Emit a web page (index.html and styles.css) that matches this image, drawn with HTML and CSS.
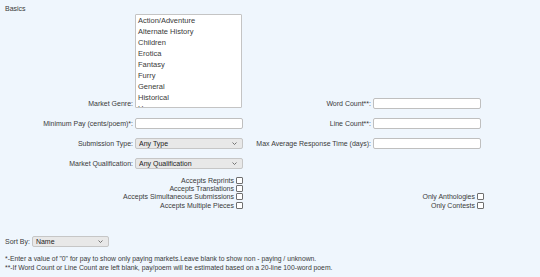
FILE: index.html
```html
<!DOCTYPE html>
<html lang="en">
<head>
  <meta charset="UTF-8">
  <meta name="viewport" content="width=device-width, initial-scale=1.0">
  <title>Market Search</title>
  <link rel="stylesheet" href="styles.css">
</head>
<body>

  <form class="search" onsubmit="return false;">
    <div class="section-title">Basics</div>

    <!-- Basic fields -->
    <div class="fields">
      <label class="lbl" for="genre">Market Genre:</label>
      <select class="genres" id="genre" multiple>
        <option>Action/Adventure</option>
        <option>Alternate History</option>
        <option>Children</option>
        <option>Erotica</option>
        <option>Fantasy</option>
        <option>Furry</option>
        <option>General</option>
        <option>Historical</option>
        <option>Horror</option>
        <option>Humor</option>
      </select>
      <label class="lbl" for="wordCount">Word Count**:</label>
      <input type="text" class="txt" id="wordCount">

      <label class="lbl" for="minPay">Minimum Pay (cents/poem)*:</label>
      <input type="text" class="txt" id="minPay">
      <label class="lbl" for="lineCount">Line Count**:</label>
      <input type="text" class="txt" id="lineCount">

      <label class="lbl" for="subType">Submission Type:</label>
      <span class="select-wrap">
        <select class="drop" id="subType">
          <option>Any Type</option>
          <option>Electronic</option>
          <option>Postal</option>
        </select>
        <svg class="chev" width="5" height="3" viewBox="0 0 5 3"><path d="M0.5 0.5 L2.5 2.5 L4.5 0.5" fill="none" stroke="#555" stroke-width="0.8"/></svg>
      </span>
      <label class="lbl" for="maxResponse">Max Average Response Time (days):</label>
      <input type="text" class="txt" id="maxResponse">

      <label class="lbl" for="qualification">Market Qualification:</label>
      <span class="select-wrap">
        <select class="drop" id="qualification">
          <option>Any Qualification</option>
          <option>Pro</option>
          <option>Semi-Pro</option>
        </select>
        <svg class="chev" width="5" height="3" viewBox="0 0 5 3"><path d="M0.5 0.5 L2.5 2.5 L4.5 0.5" fill="none" stroke="#555" stroke-width="0.8"/></svg>
      </span>
    </div>

    <!-- Checkboxes -->
    <div class="checks">
      <div class="check-col">
        <label class="check">Accepts Reprints <input type="checkbox"></label>
        <label class="check">Accepts Translations <input type="checkbox"></label>
        <label class="check">Accepts Simultaneous Submissions <input type="checkbox"></label>
        <label class="check">Accepts Multiple Pieces <input type="checkbox"></label>
      </div>
      <div class="check-col">
        <label class="check">Only Anthologies <input type="checkbox"></label>
        <label class="check">Only Contests <input type="checkbox"></label>
      </div>
    </div>

    <div class="sort">
      <label for="sortBy">Sort By:</label>
      <span class="select-wrap sort-select">
        <select class="drop" id="sortBy">
          <option>Name</option>
          <option>Pay</option>
          <option>Response Time</option>
        </select>
        <svg class="chev" width="5" height="3" viewBox="0 0 5 3"><path d="M0.5 0.5 L2.5 2.5 L4.5 0.5" fill="none" stroke="#555" stroke-width="0.8"/></svg>
      </span>
    </div>

    <p class="notes">
      *-Enter a value of "0" for pay to show only paying markets.Leave blank to show non - paying / unknown.<br>
      **-If Word Count or Line Count are left blank, pay/poem will be estimated based on a 20-line 100-word poem.
    </p>
  </form>

</body>
</html>
```

FILE: styles.css
```css
body, html {
  margin: 0;
  padding: 0;
  width: 100%;
  height: 100%;
  background-color: #eff6fd;
  color: #3a3a3a;
  font-family: "Liberation Sans", Arial, sans-serif;
  font-size: 7px;
  overflow: hidden;
}
.search {
  padding: 4px 5px 0 5px;
}
.section-title {
  line-height: 9px;
  margin-bottom: 1px;
}
.fields {
  display: grid;
  grid-template-columns: 130px 108px 130px 111px;
  row-gap: 9px;
  align-items: end;
}
.lbl {
  text-align: right;
  padding-right: 2px;
  line-height: 11px;
  white-space: nowrap;
}
.genres {
  box-sizing: border-box;
  width: 107px;
  height: 94px;
  margin: 0 0 1px 0;
  padding: 0;
  border: 1px solid #c4c4c4;
  border-radius: 1px;
  background: #fff;
  font-family: "Liberation Sans", Arial, sans-serif;
  font-size: 7.5px;
  color: #3a3a3a;
  scrollbar-width: none;
  outline: none;
}
.genres::-webkit-scrollbar {
  display: none;
}
.genres option {
  padding: 1px 2px;
  line-height: 9px;
}
.txt {
  box-sizing: border-box;
  width: 108px;
  height: 11px;
  margin: 0;
  padding: 0 3px;
  border: 1px solid #bfbfbf;
  border-radius: 2px;
  background: #fff;
  font-size: 7px;
}
.select-wrap {
  position: relative;
  display: inline-block;
  width: 108px;
  height: 11px;
}
.drop {
  -webkit-appearance: none;
  appearance: none;
  box-sizing: border-box;
  width: 100%;
  height: 11px;
  margin: 0;
  padding: 0 3px;
  border: 1px solid #c6c6c6;
  border-radius: 2px;
  background: #e8e8e8;
  color: #222;
  font-family: "Liberation Sans", Arial, sans-serif;
  font-size: 7px;
  line-height: 9px;
  display: block;
}
.chev {
  position: absolute;
  right: 6px;
  top: 4px;
  pointer-events: none;
}
.checks {
  display: grid;
  grid-template-columns: 238px 241px;
  align-items: end;
  margin-top: 7px;
}
.check-col {
  display: flex;
  flex-direction: column;
  align-items: flex-end;
}
.check {
  display: flex;
  align-items: center;
  gap: 2px;
  height: 8.3px;
  white-space: nowrap;
}
.check input {
  -webkit-appearance: none;
  appearance: none;
  box-sizing: border-box;
  width: 7px;
  height: 7px;
  margin: 0;
  border: 1px solid #6f6f6f;
  border-radius: 1px;
  background: #fff;
}
.sort {
  display: flex;
  align-items: center;
  gap: 2px;
  margin-top: 27px;
}
.sort-select {
  width: 77px;
}
.notes {
  margin: 7px 0 0 0;
  line-height: 9px;
  font-size: 6.8px;
}
```
